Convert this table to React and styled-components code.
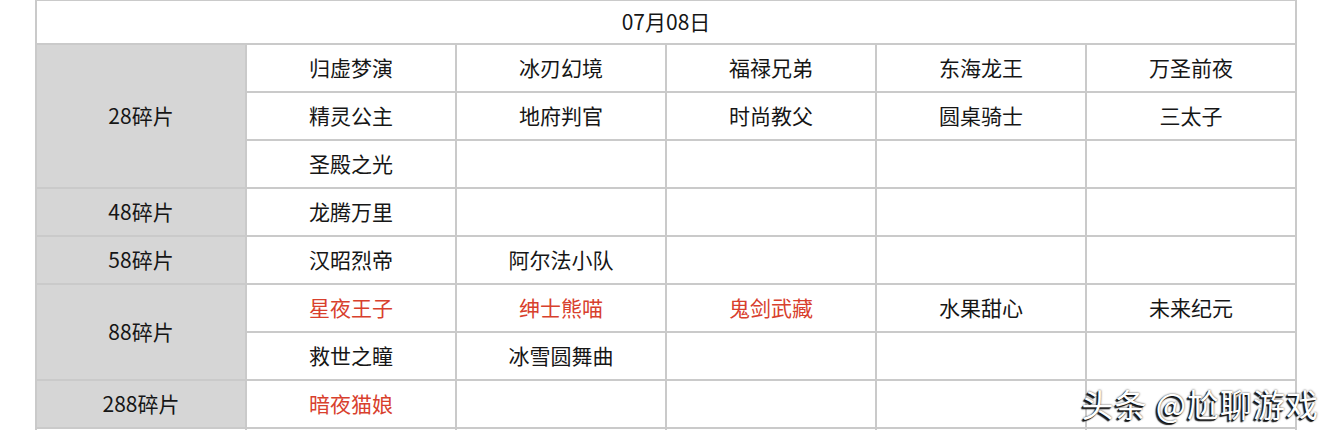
import React from 'react'
import styled, { createGlobalStyle } from 'styled-components'

const GlobalStyle = createGlobalStyle`
  html, body {
    margin: 0;
    padding: 0;
    background: #fff;
  }
  body {
    font-family: "Noto Sans CJK SC", "Noto Sans", sans-serif;
  }
`

const Page = styled.div`
  position: relative;
  width: 1334px;
  height: 430px;
  overflow: hidden;
  background: #fff;
`

const Sheet = styled.table`
  margin: -11px 0 0 35px;
  width: 1259px;
  table-layout: fixed;
  border-collapse: collapse;
  font-size: 21px;
  color: #161616;
`

const Row = styled.tr`
  height: ${p => p.h || 48}px;
`

const Cell = styled.td`
  border: 2px solid #cacaca;
  padding: 0 0 2px;
  text-align: center;
  vertical-align: middle;
  line-height: 1;
  background: ${p => (p.$label ? '#d6d6d6' : '#fff')};
  color: ${p => (p.$red ? '#d8402d' : 'inherit')};
`

const Watermark = styled.div`
  position: absolute;
  right: 15px;
  bottom: 4px;
  font-size: 32px;
  font-family: "Noto Sans CJK SC", sans-serif;
  color: #fff;
  letter-spacing: 1px;
  text-shadow: -1px 1px 0 #111, -2px 2px 1px #222, 0 0 2px #333;
`

const groups = [
  {
    label: '28碎片',
    rows: [
      ['归虚梦演', '冰刃幻境', '福禄兄弟', '东海龙王', '万圣前夜'],
      ['精灵公主', '地府判官', '时尚教父', '圆桌骑士', '三太子'],
      ['圣殿之光', '', '', '', ''],
    ],
  },
  { label: '48碎片', rows: [['龙腾万里', '', '', '', '']] },
  { label: '58碎片', rows: [['汉昭烈帝', '阿尔法小队', '', '', '']] },
  {
    label: '88碎片',
    rows: [
      ['*星夜王子', '*绅士熊喵', '*鬼剑武藏', '水果甜心', '未来纪元'],
      ['救世之瞳', '冰雪圆舞曲', '', '', ''],
    ],
  },
  { label: '288碎片', rows: [['*暗夜猫娘', '', '', '', '']] },
]

const blank = [0, 1, 2, 3, 4, 5]

const App = () => {
  return (
    <Page>
      <GlobalStyle />
      <Sheet>
        <colgroup>
          {blank.map(i => (
            <col key={i} style={{ width: 210 }} />
          ))}
        </colgroup>
        <tbody>
          <Row h={10}>
            {blank.map(i => (
              <Cell key={i} />
            ))}
          </Row>
          <Row h={44}>
            <Cell colSpan={6}>07月08日</Cell>
          </Row>
          {groups.map(g =>
            g.rows.map((r, ri) => (
              <Row key={g.label + ri}>
                {ri === 0 && (
                  <Cell $label rowSpan={g.rows.length}>
                    {g.label}
                  </Cell>
                )}
                {r.map((name, ci) => {
                  const red = name.startsWith('*')
                  return (
                    <Cell key={ci} $red={red}>
                      {red ? name.slice(1) : name}
                    </Cell>
                  )
                })}
              </Row>
            ))
          )}
          <Row h={20}>
            {blank.map(i => (
              <Cell key={i} />
            ))}
          </Row>
        </tbody>
      </Sheet>
      <Watermark>头条 @尬聊游戏</Watermark>
    </Page>
  )
}

export default App
